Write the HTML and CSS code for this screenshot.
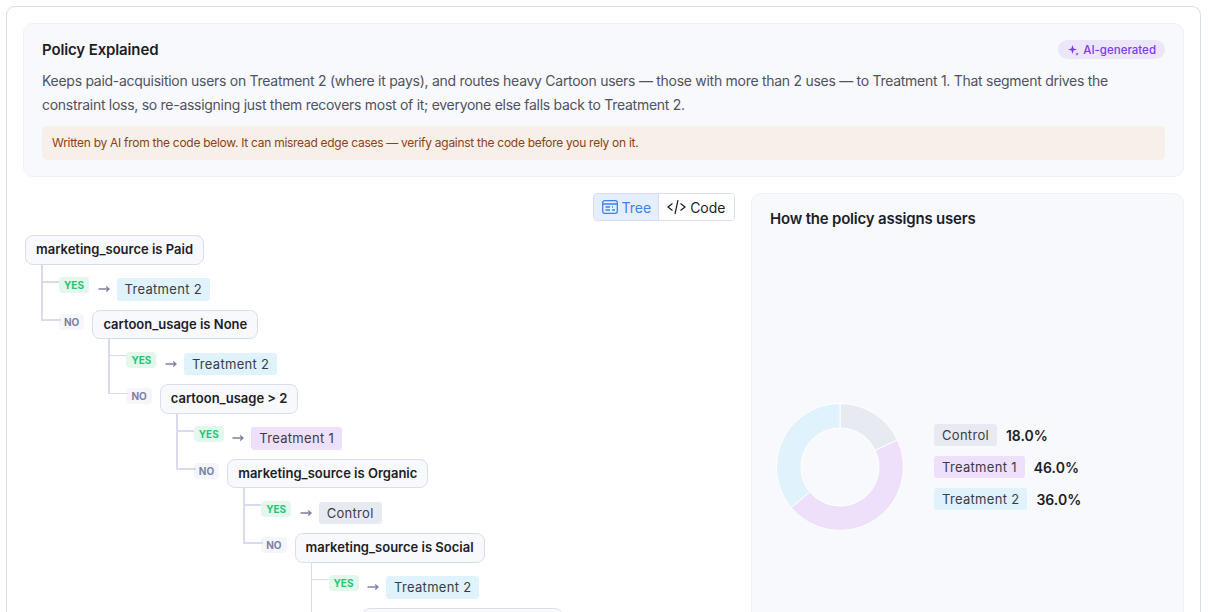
FILE: index.html
```html
<!DOCTYPE html>
<html lang="en">
<head>
    <meta charset="UTF-8">
    <title>Policy Explained</title>
    <link rel="stylesheet" href="styles.css">
</head>
<body>
    <svg class="defs" width="0" height="0">
        <symbol id="arrow" viewBox="0 0 12 8"><path d="M0.5 4H11M8.2 1.6 11 4 8.2 6.4" fill="none" stroke="currentColor" stroke-width="1.3"/></symbol>
    </svg>
    <div class="card">
        <section class="explain">
            <div class="explain-head">
                <h2>Policy Explained</h2>
                <span class="ai-tag">
                    <svg width="11" height="12" viewBox="0 0 11 12"><path d="M4.5 1 5.6 4.4 9 5.5 5.6 6.6 4.5 10 3.4 6.6 0 5.5 3.4 4.4Z" fill="currentColor"/><path d="M9 8.2 9.5 9.5 10.8 10 9.5 10.5 9 11.8 8.5 10.5 7.2 10 8.5 9.5Z" fill="currentColor"/></svg>
                    AI-generated
                </span>
            </div>
            <p class="explain-text">Keeps paid-acquisition users on Treatment 2 (where it pays), and routes heavy Cartoon users — those with more than 2 uses — to Treatment 1. That segment drives the constraint loss, so re-assigning just them recovers most of it; everyone else falls back to Treatment 2.</p>
            <p class="warning">Written by AI from the code below. It can misread edge cases — verify against the code before you rely on it.</p>
        </section>

        <div class="columns">
            <div class="tree-col">
                <div class="toggle-row">
                    <div class="toggle">
                        <button class="toggle-btn active">
                            <svg width="16" height="14" viewBox="0 0 16 14" fill="none" stroke="currentColor" stroke-width="1.3"><rect x="0.7" y="0.7" width="14.6" height="12.6" rx="2"/><path d="M0.7 4h14.6M3.5 7h4.5M3.5 10h4.5M10 10h3M10 7h1"/></svg>
                            Tree
                        </button>
                        <button class="toggle-btn">
                            <svg width="19" height="16" viewBox="0 0 19 16" fill="none" stroke="currentColor" stroke-width="1.2"><path d="M5.5 4.5 1 8l4.500 3.500M13.500 4.500 18 8l-4.500 3.500M11 1 8 15"/></svg>
                            Code
                        </button>
                    </div>
                </div>

                <div class="tree">
                    <div class="node">marketing_source is Paid</div>
                    <div class="arms">
                        <div class="arm arm-yes"><span class="badge yes">YES</span><svg class="arrow"><use href="#arrow"/></svg><span class="chip t2">Treatment 2</span></div>
                        <div class="arm arm-no"><span class="badge no">NO</span>
                            <div class="branch">
                                <div class="node">cartoon_usage is None</div>
                                <div class="arms arms-mid">
                                    <div class="arm arm-yes"><span class="badge yes">YES</span><svg class="arrow"><use href="#arrow"/></svg><span class="chip t2">Treatment 2</span></div>
                                    <div class="arm arm-no"><span class="badge no">NO</span>
                                        <div class="branch">
                                            <div class="node">cartoon_usage &gt; 2</div>
                                            <div class="arms">
                                                <div class="arm arm-yes"><span class="badge yes">YES</span><svg class="arrow"><use href="#arrow"/></svg><span class="chip t1">Treatment 1</span></div>
                                                <div class="arm arm-no"><span class="badge no">NO</span>
                                                    <div class="branch">
                                                        <div class="node">marketing_source is Organic</div>
                                                        <div class="arms">
                                                            <div class="arm arm-yes"><span class="badge yes">YES</span><svg class="arrow"><use href="#arrow"/></svg><span class="chip ctrl">Control</span></div>
                                                            <div class="arm arm-no"><span class="badge no">NO</span>
                                                                <div class="branch">
                                                                    <div class="node">marketing_source is Social</div>
                                                                    <div class="arms arms-thin">
                                                                        <div class="arm arm-yes"><span class="badge yes">YES</span><svg class="arrow"><use href="#arrow"/></svg><span class="chip t2">Treatment 2</span></div>
                                                                        <div class="arm arm-no"><span class="badge no">NO</span>
                                                                            <div class="branch">
                                                                                <div class="node">marketing_source is Referral</div>
                                                                            </div>
                                                                        </div>
                                                                    </div>
                                                                </div>
                                                            </div>
                                                        </div>
                                                    </div>
                                                </div>
                                            </div>
                                        </div>
                                    </div>
                                </div>
                            </div>
                        </div>
                    </div>
                </div>
            </div>

            <aside class="panel">
                <h3>How the policy assigns users</h3>
                <div class="chart">
                    <svg class="donut" width="128" height="128" viewBox="0 0 128 128" stroke="#fff" stroke-width="1">
                        <path fill="#e8eaf2" d="M64 0.5A63.5 63.500 0 0 1 121.46 36.96L99.29 47.39A39 39 0 0 0 64 25Z"/>
                        <path fill="#eedffb" d="M121.46 36.96A63.5 63.500 0 0 1 15.07 104.47L33.95 88.86A39 39 0 0 0 99.29 47.39Z"/>
                        <path fill="#e0f2fb" d="M15.07 104.47A63.5 63.500 0 0 1 64 0.5V25A39 39 0 0 0 33.95 88.86Z"/>
                    </svg>
                    <div class="legend">
                        <div class="legend-row"><span class="chip ctrl">Control</span><b>18.0%</b></div>
                        <div class="legend-row"><span class="chip t1">Treatment 1</span><b>46.0%</b></div>
                        <div class="legend-row"><span class="chip t2">Treatment 2</span><b>36.0%</b></div>
                    </div>
                </div>
            </aside>
        </div>
    </div>
</body>
</html>
```

FILE: styles.css
```css
* {
    box-sizing: border-box;
}

html,
body {
    height: 100%;
    overflow: hidden;
}

body {
    margin: 0;
    padding: 6px 7px 0 6px;
    background: #fff;
    color: #1c1e26;
    font-family: Inter, "Noto Sans", sans-serif;
}

.defs {
    display: block;
}

.card {
    height: 900px;
    padding: 16px;
    border: 1px solid #d9deef;
    border-radius: 9px;
}

/* explanation box */
.explain {
    height: 154px;
    padding: 15px 18px;
    background: #f8f9fd;
    border: 1px solid #eff1f8;
    border-radius: 10px;
}

.explain-head {
    display: flex;
    justify-content: space-between;
    align-items: center;
    height: 21px;
}

.explain-head h2 {
    margin: 0;
    font-size: 15px;
    font-weight: 600;
    letter-spacing: -0.13px;
}

.ai-tag {
    display: flex;
    align-items: center;
    gap: 4px;
    height: 19px;
    padding: 0 9px 0 10px;
    border-radius: 10px;
    background: #ece6fb;
    color: #7c3aed;
    font-size: 11.5px;
    font-weight: 500;
}

.explain-text {
    margin: 9px 0 0;
    font-size: 14px;
    line-height: 24px;
    letter-spacing: -0.28px;
    color: #50525f;
}

.warning {
    margin: 9px 0 0;
    height: 34px;
    padding: 0 10px;
    border-radius: 5px;
    background: #f7f0ea;
    color: #92400e;
    font-size: 12px;
    line-height: 34px;
    letter-spacing: -0.28px;
}

.columns {
    display: flex;
    gap: 16px;
    margin-top: 16px;
}

/* tree side */
.tree-col {
    width: 712px;
}

.toggle-row {
    display: flex;
    justify-content: flex-end;
}

.toggle {
    display: flex;
    height: 28px;
    border: 1px solid #d9deef;
    border-radius: 4px;
    overflow: hidden;
}

.toggle-btn {
    display: flex;
    align-items: center;
    gap: 4px;
    padding: 0 8.5px;
    border: 0;
    background: #fff;
    color: #1c1e26;
    font-family: inherit;
    font-size: 14px;
}

.toggle-btn.active {
    padding: 0 6.5px 0 8px;
    background: #e5eefc;
    color: #3b82f6;
    border-right: 1px solid #d9deef;
}

.tree {
    margin: 14px 0 0 2px;
}

.node {
    display: block;
    width: fit-content;
    height: 29.6px;
    padding: 0 10px;
    border: 1px solid #d9deef;
    border-radius: 8px;
    background: #f8f9fd;
    font-size: 13px;
    font-weight: 600;
    line-height: 27.6px;
    white-space: nowrap;
}

.arms {
    --line-v: 2px;
    --line-h: 2px;
    margin-left: 16px;
}

.arms-mid {
    --line-h: 1px;
}

.arms-thin {
    --line-v: 1px;
    --line-h: 1px;
}

.arm {
    position: relative;
    display: flex;
    align-items: flex-start;
    padding-left: 18px;
}

.arm-yes {
    padding-top: 13.4px;
    padding-bottom: 9px;
}

.arm-yes::before {
    content: "";
    position: absolute;
    left: 0;
    top: 0;
    bottom: 0;
    border-left: var(--line-v) solid #d8dbee;
}

.arm-yes::after {
    content: "";
    position: absolute;
    left: 0;
    top: 16px;
    width: 18px;
    border-top: var(--line-h) solid #d8dbee;
}

.arm-no::before {
    content: "";
    position: absolute;
    left: 0;
    top: 0;
    width: 18px;
    height: 9px;
    border-left: var(--line-v) solid #d8dbee;
    border-bottom: var(--line-h) solid #d8dbee;
}

.badge {
    flex: none;
    height: 16px;
    padding: 0 5px;
    border-radius: 4px;
    font-size: 10px;
    font-weight: 700;
    line-height: 16px;
}

.badge.yes {
    width: 30px;
    margin-top: -1px;
    background: #e3f7ec;
    color: #22c574;
}

.badge.no {
    width: 25.4px;
    margin: 4px 8px 0 0;
    background: #f5f6fb;
    color: #7d82a0;
}

.arrow {
    flex: none;
    width: 12px;
    height: 8px;
    margin: 7px 7px 0 8.5px;
    color: #7d82a0;
}

.chip {
    display: inline-block;
    height: 22.6px;
    padding: 0 8px;
    border-radius: 3px;
    color: #3a3c48;
    font-size: 13px;
    font-weight: 400;
    letter-spacing: 0.3px;
    line-height: 22.6px;
    white-space: nowrap;
}

.chip.t1 {
    background: #eedffb;
}

.chip.t2 {
    background: #e0f2fb;
}

.chip.ctrl {
    background: #e8eaf2;
}

/* assignment panel */
.panel {
    width: 433px;
    height: 600px;
    padding: 14px 18px;
    background: #f8f9fd;
    border: 1px solid #eff1f8;
    border-radius: 10px;
}

.panel h3 {
    margin: 0;
    font-size: 15px;
    font-weight: 600;
    letter-spacing: -0.2px;
    line-height: 21px;
}

.chart {
    display: flex;
    align-items: center;
    gap: 30px;
    margin: 174px 0 0 6px;
}

.legend {
    display: flex;
    flex-direction: column;
    gap: 10px;
}

.legend-row {
    display: flex;
    align-items: center;
    gap: 9px;
    font-size: 14px;
}

.legend-row .chip {
    height: 22px;
    line-height: 22px;
}

.legend-row b {
    font-weight: 600;
}
```
